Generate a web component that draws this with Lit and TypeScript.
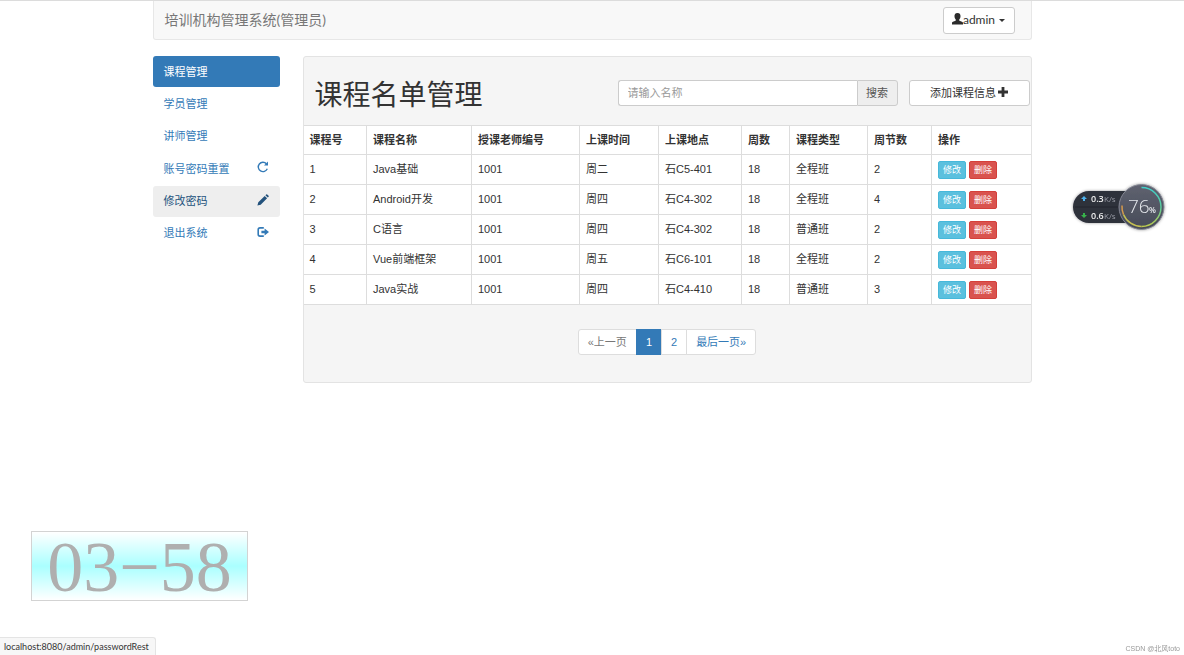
import { LitElement, html, css, svg } from "lit";
import { customElement, state } from "lit/decorators.js";
import { classMap } from "lit/directives/class-map.js";

interface Course {
  id: number;
  name: string;
  teacher: string;
  day: string;
  place: string;
  weeks: number;
  type: string;
  periods: number;
}

const COURSES: Course[] = [
  { id: 1, name: "Java基础", teacher: "1001", day: "周二", place: "石C5-401", weeks: 18, type: "全程班", periods: 2 },
  { id: 2, name: "Android开发", teacher: "1001", day: "周四", place: "石C4-302", weeks: 18, type: "全程班", periods: 4 },
  { id: 3, name: "C语言", teacher: "1001", day: "周四", place: "石C4-302", weeks: 18, type: "普通班", periods: 2 },
  { id: 4, name: "Vue前端框架", teacher: "1001", day: "周五", place: "石C6-101", weeks: 18, type: "全程班", periods: 2 },
  { id: 5, name: "Java实战", teacher: "1001", day: "周四", place: "石C4-410", weeks: 18, type: "普通班", periods: 3 },
];

const HEADERS = ["课程号", "课程名称", "授课老师编号", "上课时间", "上课地点", "周数", "课程类型", "周节数", "操作"];

const ICONS = {
  repeat: svg`<path d="M10.3 7.800A4.700 4.700 0 1 1 9.400 2.700" fill="none" stroke="currentColor" stroke-width="1.400"/><path d="M11 0.600V4.600H7z" fill="currentColor"/>`,
  pencil: svg`<path d="M0.4 11.6L1.3 8.3L7.7 1.9L10.1 4.3L3.7 10.7zM8.4 1.2L9.2 .4Q9.7 0 10.2 .4L11.6 1.8Q12 2.3 11.6 2.8L10.8 3.6z" fill="currentColor"/>`,
  logout: svg`<path d="M6.8 1.9H3Q1.2 1.9 1.2 3.7V8.3Q1.2 10.1 3 10.1H6.8" fill="none" stroke="currentColor" stroke-width="1.6"/><path d="M4.4 4.7H7.6V2.5L12 6L7.6 9.5V7.3H4.4z" fill="currentColor"/>`,
};

@customElement("app-root")
export class AppRoot extends LitElement {
  @state() private active = "课程管理";

  private menu = [
    { label: "课程管理", icon: null },
    { label: "学员管理", icon: null },
    { label: "讲师管理", icon: null },
    { label: "账号密码重置", icon: ICONS.repeat },
    { label: "修改密码", icon: ICONS.pencil, hover: true },
    { label: "退出系统", icon: ICONS.logout },
  ];

  static styles = css`
    :host {
      display: block;
      min-height: 100vh;
      box-sizing: border-box;
      border-top: 1px solid #dcdcdc;
      background: #fff;
      color: #333;
      font: 11px/16px "Liberation Sans", "Noto Sans CJK SC", sans-serif;
    }
    *, *::before { box-sizing: border-box; }
    button, input { font: inherit; color: inherit; margin: 0; }
    a { color: #337ab7; text-decoration: none; }
    .container { max-width: 879px; margin: 0 auto; }
    .navbar {
      display: flex;
      align-items: center;
      justify-content: space-between;
      height: 39px;
      padding: 0 16px 0 11px;
      background: #f8f8f8;
      border: 1px solid #e7e7e7;
      border-top: 0;
      border-radius: 0 0 3px 3px;
      font-family: "Lato", "Noto Sans CJK SC", sans-serif;
    }
    .brand { color: #777; font-size: 14px; line-height: 20px; }
    .user {
      display: flex;
      align-items: center;
      justify-content: center;
      width: 72px;
      height: 27px;
      padding: 0;
      background: #fff;
      border: 1px solid #ccc;
      border-radius: 3px;
      font-size: 12px;
    }
    .user svg { width: 11px; height: 12px; margin-bottom: 2px; }
    .caret {
      margin-left: 4px;
      border-top: 3px solid #333;
      border-left: 3px solid transparent;
      border-right: 3px solid transparent;
    }
    .layout {
      display: grid;
      grid-template-columns: 127px minmax(0, 1fr);
      align-items: start;
      gap: 23px;
      margin-top: 16px;
    }
    .side { display: flex; flex-direction: column; justify-content: space-between; min-height: 193px; }
    .side a {
      display: flex;
      align-items: center;
      justify-content: space-between;
      height: 31px;
      padding: 0 11px;
      border-radius: 3px;
    }
    .side a.hover { background: #eee; color: #23527c; }
    .side a.active { background: #337ab7; color: #fff; }
    .side svg { width: 12px; height: 12px; margin-bottom: 3px; }
    .panel {
      background: #f5f5f5;
      border: 1px solid #e3e3e3;
      border-radius: 3px;
      padding-bottom: 27px;
    }
    .head { display: flex; align-items: center; height: 68px; padding: 4px 1px 0 11px; }
    h1 { margin: 0; padding-top: 5px; flex: 1; font-weight: 400; font-size: 28px; line-height: 32px; white-space: nowrap; }
    .search { display: flex; width: 280px; height: 26px; margin-right: 11px; }
    .search input {
      flex: 1;
      min-width: 0;
      padding: 0 9px;
      border: 1px solid #ccc;
      border-right: 0;
      border-radius: 3px 0 0 3px;
      background: #fff;
      outline: 0;
    }
    .search input::placeholder { color: #999; opacity: 1; }
    .search button {
      width: 41px;
      padding: 0;
      color: #555;
      background: #eee;
      border: 1px solid #ccc;
      border-radius: 0 3px 3px 0;
    }
    .add {
      display: flex;
      align-items: center;
      justify-content: center;
      gap: 2px;
      width: 121px;
      height: 26px;
      padding: 0;
      background: #fff;
      border: 1px solid #ccc;
      border-radius: 3px;
    }
    .add svg { width: 10px; height: 10px; margin-bottom: 2px; }
    table { width: 100%; table-layout: fixed; border-collapse: collapse; background: #fff; }
    th, td { border: 1px solid #ddd; text-align: left; vertical-align: top; padding: 6px 0 0 6px; }
    th:first-child, td:first-child { border-left: 0; }
    th:last-child, td:last-child { border-right: 0; }
    th { height: 29px; }
    td { height: 30px; }
    .c0 { width: 63px; }
    .c1 { width: 105px; }
    .c2 { width: 108px; }
    .c3 { width: 79px; }
    .c4 { width: 83px; }
    .c5 { width: 48px; }
    .c6 { width: 78px; }
    .c7 { width: 64px; }
    .actions { display: flex; gap: 3px; }
    .actions button {
      width: 28px;
      height: 18px;
      padding: 0;
      color: #fff;
      font-size: 9px;
      line-height: 16px;
      border: 1px solid #46b8da;
      border-radius: 2px;
      background: #5bc0de;
    }
    .actions .del { background: #d9534f; border-color: #d43f3a; }
    .pages { display: flex; justify-content: center; margin: 24px 0 0; padding: 0; list-style: none; }
    .pages a {
      display: block;
      height: 26px;
      padding: 4px 9px;
      margin-left: -1px;
      background: #fff;
      border: 1px solid #ddd;
    }
    .pages li:first-child a { margin-left: 0; color: #777; border-radius: 3px 0 0 3px; }
    .pages li:last-child a { border-radius: 0 3px 3px 0; }
    .pages a.current { color: #fff; background: #337ab7; border-color: #337ab7; }
    .clock {
      position: fixed;
      left: 31px;
      bottom: 54px;
      width: 217px;
      height: 70px;
      border: 1px solid #d3d3d3;
      background: linear-gradient(#fff, #aff 50%, #fff);
      color: #afafaf;
      text-align: center;
      font: 72px/70px "Liberation Serif", serif;
    }
    .status {
      position: fixed;
      left: 0;
      bottom: 0;
      height: 18px;
      padding: 0 6px 0 4px;
      border: 1px solid #e4e4e4;
      border-left: 0;
      border-bottom: 0;
      border-radius: 0 3px 0 0;
      background: #f7f7f7;
      font: 9px/17px "Lato", sans-serif;
    }
    .mark {
      position: fixed;
      right: 4px;
      bottom: 0;
      color: #999;
      font: 7px/12px "Liberation Sans", "Noto Sans CJK SC", sans-serif;
    }
    .meter { position: fixed; right: 15px; top: 179px; width: 100px; height: 56px; }
    .meter text { font-family: "Open Sans", sans-serif; }
  `;

  private renderMeter() {
    return html`<svg class="meter" viewBox="0 0 100 56">
      <defs>
        <linearGradient id="ring" x1="0" y1="0" x2="0" y2="1">
          <stop offset="0" stop-color="#40cfc9" />
          <stop offset=".5" stop-color="#5bcb9c" />
          <stop offset="1" stop-color="#bccb4c" />
        </linearGradient>
        <linearGradient id="disc" x1="0" y1="0" x2="0" y2="1">
          <stop offset="0" stop-color="#5f6270" />
          <stop offset="1" stop-color="#474b58" />
        </linearGradient>
        <filter id="shade" x="-20%" y="-20%" width="140%" height="140%">
          <feDropShadow dx="0" dy="0" stdDeviation="1.5" flood-color="#000" flood-opacity=".4" />
        </filter>
      </defs>
      <g filter="url(#shade)">
        <path d="M60 12H20a16 16 0 0 0 0 32H60z" fill="#2d303b" />
        <circle cx="72.500" cy="28" r="22.500" fill="url(#disc)" stroke="#858894" />
      </g>
      <path d="M6 28H49" stroke="#22252e" />
      <path d="M72.500 8.500a19.500 19.500 0 0 1 0 39" fill="none" stroke="url(#ring)" stroke-width="1.500" />
      <path d="M72.500 47.500a19.500 19.500 0 0 1-18-12" fill="none" stroke="#c5c052" stroke-width="1.500" />
      <path d="M54.500 35.500a19.500 19.500 0 0 1-1.500-9" fill="none" stroke="#d79a4c" stroke-width="1.500" />
      <path d="M15 17l3 3h-2v2h-2v-2h-2z" fill="#4db2ee" />
      <path d="M15 39l3-3h-2v-2h-2v2h-2z" fill="#37b34a" />
      <text x="22" y="23" font-size="9" font-weight="600" fill="#eee">0.3</text>
      <text x="35" y="23" font-size="8" fill="#989ba5">K/s</text>
      <text x="22" y="40" font-size="9" font-weight="600" fill="#eee">0.6</text>
      <text x="35" y="40" font-size="8" fill="#989ba5">K/s</text>
      <text x="59" y="34" font-size="19" font-weight="300" fill="#e6e8ed">76</text>
      <text x="80" y="34" font-size="8" font-weight="600" fill="#e6e8ed">%</text>
    </svg>`;
  }

  render() {
    return html`
      <div class="container">
        <header class="navbar">
          <span class="brand">培训机构管理系统(管理员)</span>
          <button class="user" type="button">
            <svg viewBox="0 0 11 12"><path d="M5.500 0C7.900 0 8.700 1.500 8.500 3.600C8.300 5.400 7.700 6 7.200 6.700V7.600C7.900 8.400 11 8.700 11 10V11.500H0V10C0 8.700 3.100 8.400 3.800 7.600V6.700C3.300 6 2.700 5.400 2.500 3.600C2.300 1.500 3.100 0 5.500 0z" fill="#2b2b2b" /></svg>admin<span class="caret"></span>
          </button>
        </header>
        <div class="layout">
          <nav class="side">
            ${this.menu.map(
              (m) => html`<a
                href="#"
                class=${classMap({ active: m.label === this.active, hover: !!m.hover })}
                @click=${(e: Event) => { e.preventDefault(); this.active = m.label; }}
                ><span>${m.label}</span>${m.icon ? html`<svg viewBox="0 0 12 12">${m.icon}</svg>` : null}</a>`
            )}
          </nav>
          <main class="panel">
            <div class="head">
              <h1>课程名单管理</h1>
              <form class="search" @submit=${(e: Event) => e.preventDefault()}>
                <input type="text" aria-label="请输入名称" placeholder="请输入名称" />
                <button type="submit">搜索</button>
              </form>
              <button class="add" type="button">
                添加课程信息
                <svg viewBox="0 0 10 10"><path d="M3.600 0H6.400V3.600H10V6.400H6.400V10H3.600V6.400H0V3.600H3.600z" fill="#333" /></svg>
              </button>
            </div>
            <table>
              <thead>
                <tr>${HEADERS.map((h, i) => html`<th class="c${i}">${h}</th>`)}</tr>
              </thead>
              <tbody>
                ${COURSES.map(
                  (c) => html`<tr>
                    <td>${c.id}</td>
                    <td>${c.name}</td>
                    <td>${c.teacher}</td>
                    <td>${c.day}</td>
                    <td>${c.place}</td>
                    <td>${c.weeks}</td>
                    <td>${c.type}</td>
                    <td>${c.periods}</td>
                    <td>
                      <div class="actions">
                        <button type="button">修改</button>
                        <button type="button" class="del">删除</button>
                      </div>
                    </td>
                  </tr>`
                )}
              </tbody>
            </table>
            <ul class="pages">
              <li><a href="#">«上一页</a></li>
              <li><a href="#" class="current">1</a></li>
              <li><a href="#">2</a></li>
              <li><a href="#">最后一页»</a></li>
            </ul>
          </main>
        </div>
      </div>
      ${this.renderMeter()}
      <div class="clock">03−58</div>
      <div class="status">localhost:8080/admin/passwordRest</div>
      <div class="mark">CSDN @北风toto</div>
    `;
  }
}
